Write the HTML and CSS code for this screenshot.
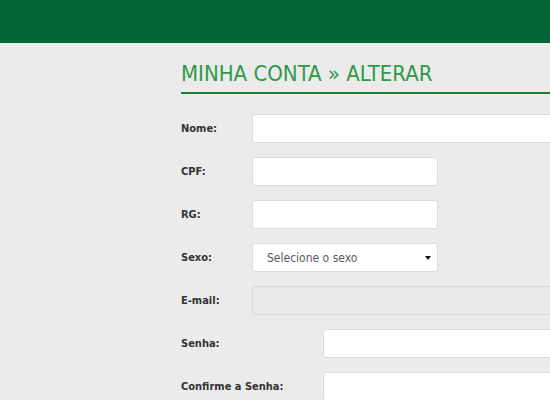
FILE: index.html
```html
<!DOCTYPE html>
<html lang="pt-BR">
<head>
    <meta charset="UTF-8">
    <meta name="viewport" content="width=device-width, initial-scale=1.0">
    <title>Minha Conta - Alterar</title>
    <link rel="stylesheet" href="styles.css">
</head>
<body>
    <header class="topbar"></header>
    <main class="page">
        <h1 class="page-title">MINHA CONTA &raquo; ALTERAR</h1>
        <form class="account-form">
            <div class="field">
                <label for="nome">Nome:</label>
                <input type="text" id="nome" class="input input-wide">
            </div>
            <div class="field">
                <label for="cpf">CPF:</label>
                <input type="text" id="cpf" class="input input-short">
            </div>
            <div class="field">
                <label for="rg">RG:</label>
                <input type="text" id="rg" class="input input-short">
            </div>
            <div class="field">
                <label for="sexo">Sexo:</label>
                <select id="sexo" class="input input-short select">
                    <option value="">Selecione o sexo</option>
                    <option value="M">Masculino</option>
                    <option value="F">Feminino</option>
                </select>
            </div>
            <div class="field">
                <label for="email">E-mail:</label>
                <input type="email" id="email" class="input input-wide" disabled>
            </div>
            <div class="field field-pass">
                <label for="senha">Senha:</label>
                <input type="password" id="senha" class="input input-wide">
            </div>
            <div class="field field-pass">
                <label for="confirma">Confirme a Senha:</label>
                <input type="password" id="confirma" class="input input-wide">
            </div>
        </form>
    </main>
</body>
</html>
```

FILE: styles.css
```css
html, body {
    overflow: hidden;
}
body {
    margin: 0;
    font-family: "DejaVu Sans Condensed", "DejaVu Sans", sans-serif;
    font-stretch: condensed;
    background-color: #ebebeb;
    color: #333;
}
.topbar {
    height: 43px;
    background-color: #046537;
}
.page {
    padding-left: 181px;
}
.page-title {
    margin: 0;
    padding-top: 17px;
    padding-bottom: 5px;
    font-size: 22px;
    font-weight: normal;
    line-height: 27px;
    color: #2e9a47;
    border-bottom: 2px solid #1f7c3e;
    white-space: nowrap;
}
.account-form {
    padding-top: 20px;
}
.field {
    display: flex;
    align-items: center;
    height: 29px;
    margin-bottom: 14px;
}
.field label {
    flex: 0 0 71px;
    font-size: 11px;
    font-weight: bold;
    color: #333;
}
.field-pass label {
    flex-basis: 142px;
}
.input {
    box-sizing: border-box;
    height: 29px;
    border: 1px solid #dcdcdc;
    border-radius: 3px;
    background-color: #fff;
    font-family: inherit;
    font-size: 12px;
    padding: 0 14px;
    color: #5a5a5a;
}
.input-wide {
    width: 420px;
    flex: 0 0 auto;
}
.input-short {
    width: 186px;
}
.input:disabled {
    background-color: #e9e9e9;
    border-color: #d8d8d8;
}
.select {
    -webkit-appearance: none;
    appearance: none;
    background-image: url("data:image/svg+xml,%3Csvg xmlns='http://www.w3.org/2000/svg' width='6' height='6'%3E%3Cpath d='M0 1h6L3 5z' fill='%23111'/%3E%3C/svg%3E");
    background-repeat: no-repeat;
    background-position: right 6px center;
}
```
